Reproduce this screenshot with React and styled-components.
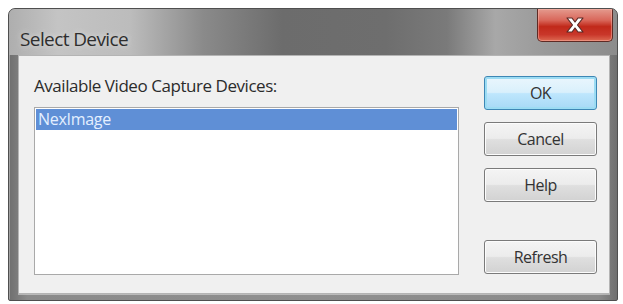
import React from 'react'
import styled, { createGlobalStyle } from 'styled-components'

const GlobalStyle = createGlobalStyle`
  html, body {
    margin: 0;
    padding: 0;
    background: #ffffff;
  }
  body {
    font-family: "Open Sans", "Liberation Sans", sans-serif;
  }
`;

const Page = styled.div`
  width: 623px;
  height: 304px;
  padding: 8px 5px 3px 8px;
  box-sizing: border-box;
  display: flex;
`;

const Window = styled.div`
  flex: 1;
  display: flex;
  flex-direction: column;
  border: 1px solid #4f4f4f;
  border-radius: 7px 7px 2px 2px;
  background: linear-gradient(to right, #6f6f6f 0%, #8a8a8a 3%, #8f8f8f 50%, #8a8a8a 97%, #6f6f6f 100%);
  box-shadow: inset 1px 1px 0 rgba(255, 255, 255, 0.35);
  overflow: hidden;
`;

const TitleBar = styled.div`
  height: 46px;
  display: flex;
  align-items: flex-start;
  justify-content: space-between;
  padding: 0 4px 0 11px;
  background: linear-gradient(
    to right,
    #aeaeae 0%,
    #c4c4c4 8%,
    #bcbcbc 20%,
    #8a8a8a 32%,
    #6c6c6c 45%,
    #6e6e6e 62%,
    #7a7a7a 72%,
    #a8a8a8 80%,
    #9a9a9a 88%,
    #8c8c8c 100%
  );
`;

const Title = styled.div`
  margin-top: 17px;
  font-size: 19px;
  letter-spacing: -0.6px;
  color: #2e2e2e;
  text-shadow: 0 0 6px rgba(235, 235, 235, 0.9);
`;

const CloseButton = styled.div`
  width: 76px;
  height: 33px;
  box-sizing: border-box;
  border: 1px solid #5e2a24;
  border-top: none;
  border-radius: 0 0 5px 5px;
  background: linear-gradient(
    to bottom,
    #e49a8e 0%,
    #d9675a 35%,
    #c1291a 55%,
    #c9372a 80%,
    #dd6a52 100%
  );
  box-shadow: inset 0 0 0 1px rgba(255, 190, 180, 0.45);
  display: flex;
  align-items: center;
  justify-content: center;
`;

const Body = styled.div`
  flex: 1;
  display: flex;
  padding: 0 7px 6px 9px;
`;

const Client = styled.div`
  flex: 1;
  display: flex;
  gap: 25px;
  padding: 18px 12px 18px 15px;
  background: #f0f0f0;
  border: 1px solid #b4b4b4;
  box-shadow: 0 1px 0 rgba(255, 255, 255, 0.4);
`;

const DeviceColumn = styled.div`
  flex: 1;
  display: flex;
  flex-direction: column;
`;

const Label = styled.div`
  font-size: 17px;
  letter-spacing: -0.45px;
  color: #2b2b2b;
  line-height: 24px;
  margin-bottom: 9px;
`;

const ListBox = styled.div`
  flex: 1;
  background: #ffffff;
  border: 1px solid #a9a9a9;
  padding: 1px;
`;

const ListItem = styled.div`
  height: 21px;
  line-height: 21px;
  padding-left: 2px;
  font-size: 16px;
  letter-spacing: -0.3px;
  color: ${({ selected }) => (selected ? '#e4efff' : '#2b2b2b')};
  background: ${({ selected }) => (selected ? '#5f8fd6' : 'transparent')};
`;

const ButtonColumn = styled.div`
  width: 113px;
  display: flex;
  flex-direction: column;
  gap: 12px;
  padding-top: 2px;
`;

const Button = styled.button`
  height: 34px;
  width: 100%;
  box-sizing: border-box;
  margin-top: ${({ gapBefore }) => gapBefore || 0}px;
  border: 1px solid ${({ primary }) => (primary ? '#3d87b5' : '#7a7a7a')};
  border-radius: 3px;
  background: ${({ primary }) =>
    primary
      ? 'linear-gradient(to bottom, #eaf6fd 0%, #d9f0fc 48%, #bee6fd 52%, #a7d9f5 100%)'
      : 'linear-gradient(to bottom, #f4f4f4 0%, #ececec 48%, #dfdfdf 52%, #d2d2d2 100%)'};
  box-shadow: ${({ primary }) =>
    primary ? 'inset 0 0 0 2px #9cdcf3' : 'inset 0 0 0 1px #fcfcfc'};
  font-family: "Open Sans", "Liberation Sans", sans-serif;
  font-size: 16px;
  letter-spacing: -0.5px;
  color: #333333;
  padding: 0;
`;

const CloseGlyph = () => (
  <svg width="22" height="18" viewBox="0 0 22 18">
    <path
      d="M3 2 L8 2 L11 6 L14 2 L19 2 L13.5 9 L19 16 L14 16 L11 12 L8 16 L3 16 L8.5 9 Z"
      fill="#ffffff"
      stroke="#5a2a26"
      strokeWidth="1.2"
      strokeLinejoin="round"
    />
  </svg>
);

const devices = [{ name: 'NexImage', selected: true }];

export default function App() {
  return (
    <>
      <GlobalStyle />
      <Page>
        <Window>
          <TitleBar>
            <Title>Select Device</Title>
            <CloseButton>
              <CloseGlyph />
            </CloseButton>
          </TitleBar>
          <Body>
            <Client>
              <DeviceColumn>
                <Label>Available Video Capture Devices:</Label>
                <ListBox>
                  {devices.map((d) => (
                    <ListItem key={d.name} selected={d.selected}>
                      {d.name}
                    </ListItem>
                  ))}
                </ListBox>
              </DeviceColumn>
              <ButtonColumn>
                <Button primary>OK</Button>
                <Button>Cancel</Button>
                <Button>Help</Button>
                <Button gapBefore={26}>Refresh</Button>
              </ButtonColumn>
            </Client>
          </Body>
        </Window>
      </Page>
    </>
  );
}
